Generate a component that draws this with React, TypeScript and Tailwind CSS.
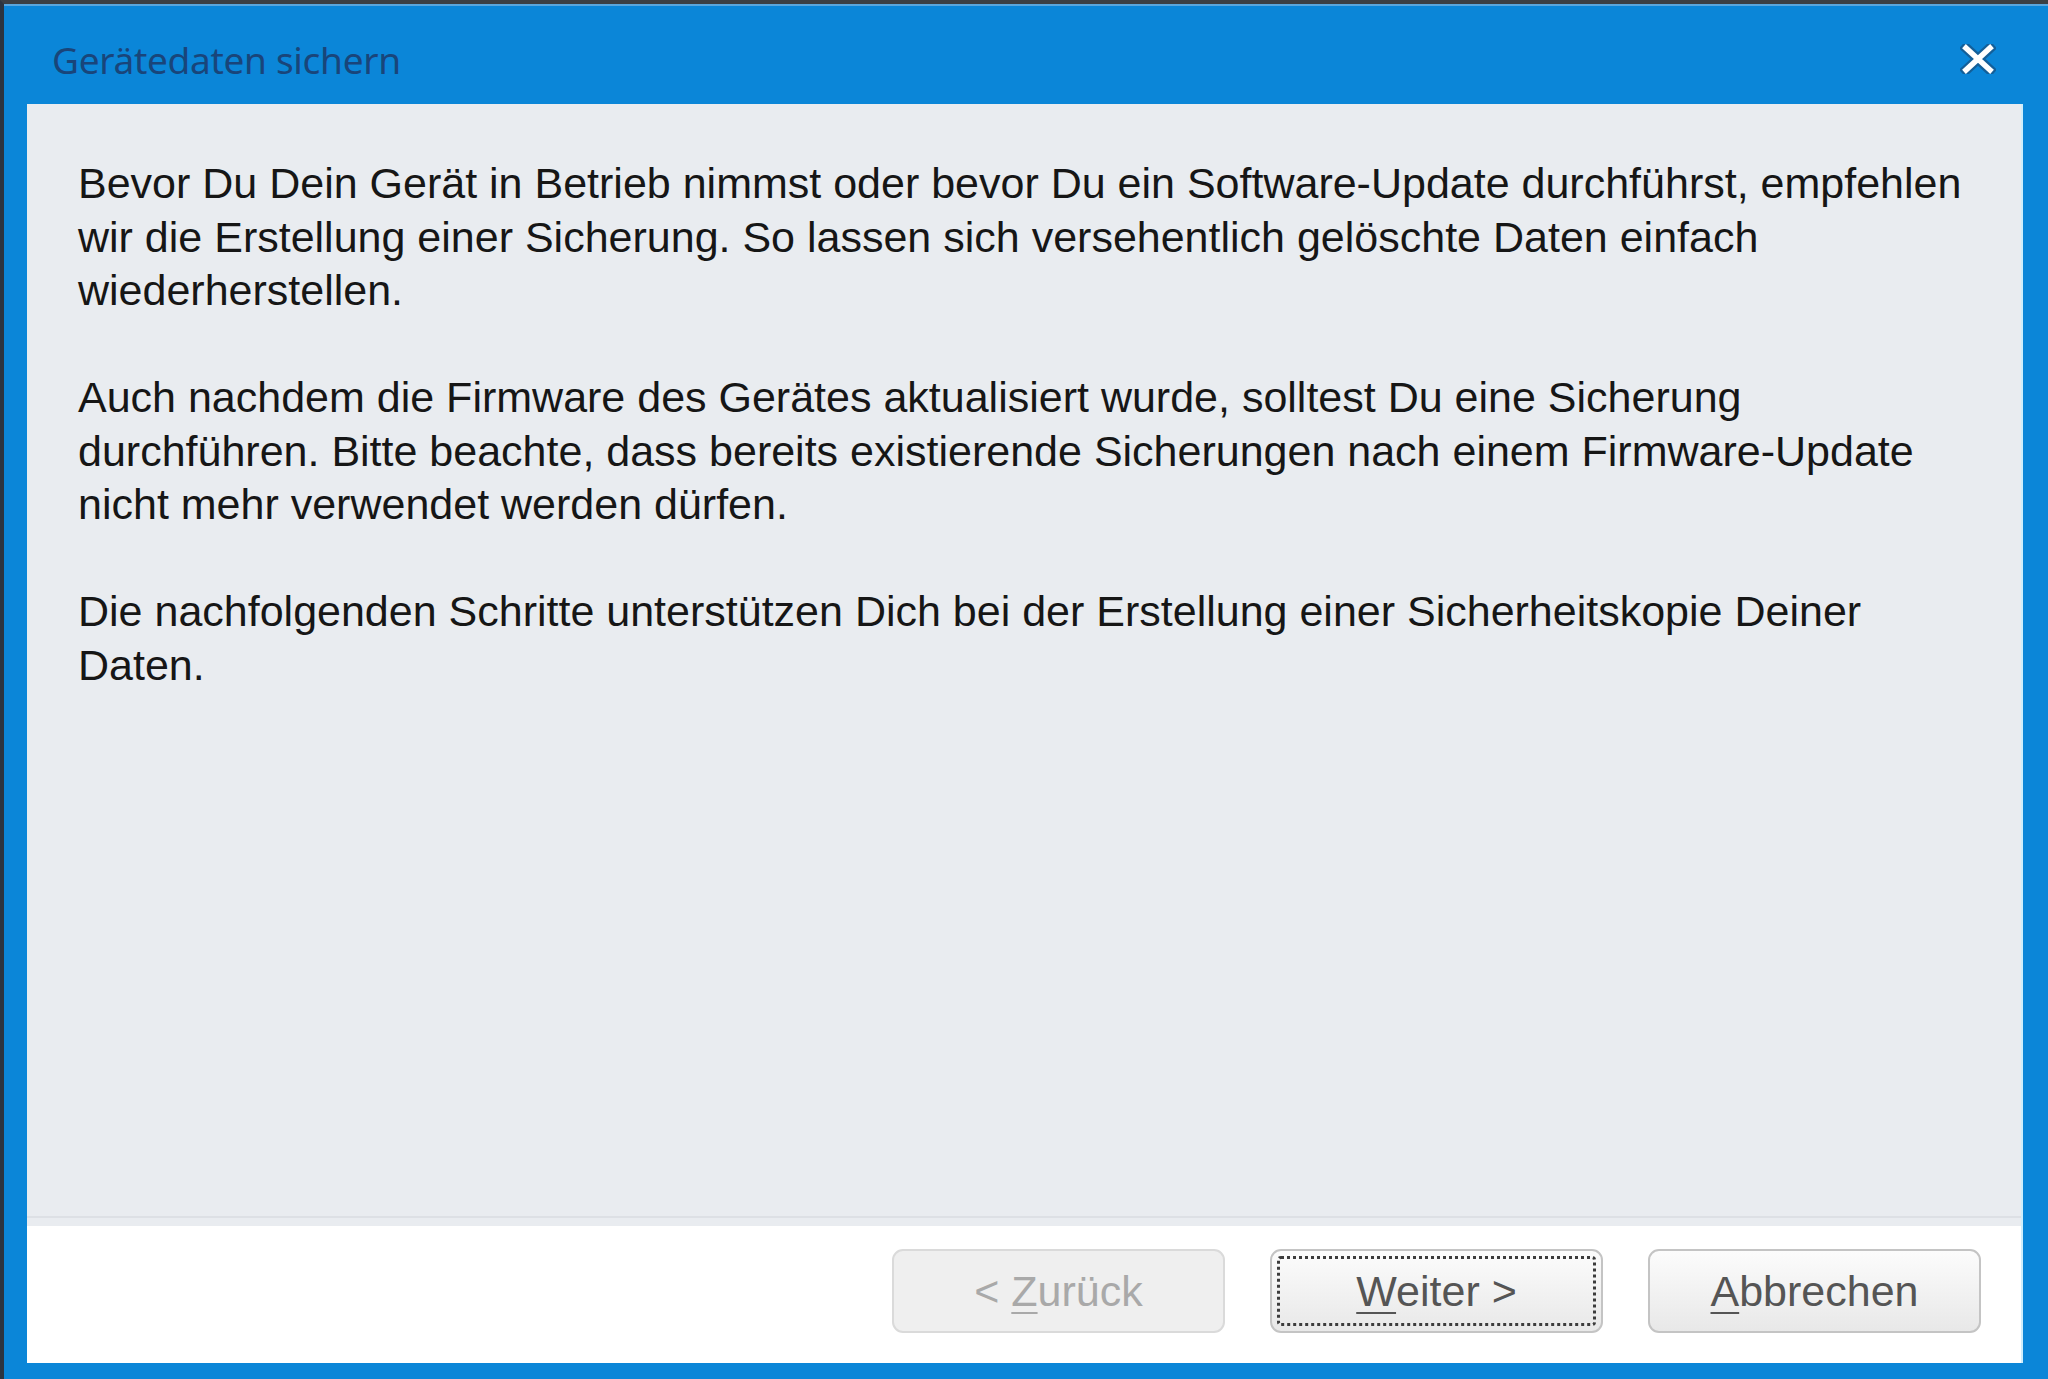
import React from 'react';

const paragraphs: string[][] = [
  [
    'Bevor Du Dein Gerät in Betrieb nimmst oder bevor Du ein Software-Update durchführst, empfehlen',
    'wir die Erstellung einer Sicherung. So lassen sich versehentlich gelöschte Daten einfach',
    'wiederherstellen.',
  ],
  [
    'Auch nachdem die Firmware des Gerätes aktualisiert wurde, solltest Du eine Sicherung',
    'durchführen. Bitte beachte, dass bereits existierende Sicherungen nach einem Firmware-Update',
    'nicht mehr verwendet werden dürfen.',
  ],
  [
    'Die nachfolgenden Schritte unterstützen Dich bei der Erstellung einer Sicherheitskopie Deiner',
    'Daten.',
  ],
];

function CloseIcon() {
  return (
    <svg width="36" height="30" viewBox="0 0 36 30" className="block">
      <g strokeLinecap="square">
        <path d="M6 4 L30 26 M30 4 L6 26" stroke="#1c3f66" strokeOpacity="0.55" strokeWidth="10" />
        <path d="M6 4 L30 26 M30 4 L6 26" stroke="#ffffff" strokeWidth="5.5" />
      </g>
    </svg>
  );
}

type BtnProps = {
  mnemonic: string;
  before?: string;
  after: string;
  disabled?: boolean;
  focused?: boolean;
};

function WizardButton({ mnemonic, before = '', after, disabled, focused }: BtnProps) {
  const base =
    'w-[333px] h-[84px] rounded-[11px] flex items-center justify-center text-[43px] leading-none';
  const look = disabled
    ? 'bg-[#efefef] border-2 border-[#dadada] text-[#a9a9a9]'
    : 'bg-gradient-to-b from-[#fcfcfc] to-[#e8e8e8] border-2 border-[#c4c4c4] text-[#555555]';
  const focus = focused ? 'outline-[3px] outline-dotted outline-[#3c3c3c] outline-offset-[-10px]' : '';
  return (
    <button className={`${base} ${look} ${focus}`} style={{ fontFamily: '"Liberation Sans", Arial, sans-serif' }}>
      <span>
        {before}
        <u className="underline decoration-2 underline-offset-[6px]">{mnemonic}</u>
        {after}
      </span>
    </button>
  );
}

export default function App() {
  return (
    <div className="w-[2048px] h-[1379px] overflow-hidden bg-[#0b86d8] border-t-4 border-l-4 border-t-[#3b3f44] border-l-[#2c3440] flex flex-col">
      {/* title bar */}
      <div className="h-[100px] shrink-0 flex items-center justify-between pl-[48px] pr-[52px] pt-[8px] border-t-2 border-[#5aa6dd]">
        <span
          className="text-[37px] leading-none tracking-[-0.3px] text-[#19457a]"
          style={{ fontFamily: '"Noto Sans", "Open Sans", sans-serif' }}
        >
          Gerätedaten sichern
        </span>
        <CloseIcon />
      </div>

      {/* client area */}
      <div className="flex-1 ml-[23px] mr-[25px] mb-[16px] flex flex-col bg-white border-r-2 border-[#cfeefc]">
        <div
          className="flex-1 bg-[#e9ecf0] flex flex-col pl-[51px] pr-[40px] pt-[53px] text-[43px] leading-[53.5px] text-[#161616]"
          style={{ fontFamily: '"Liberation Sans", Arial, sans-serif' }}
        >
          <div className="flex-1 flex flex-col gap-[53.5px]">
            {paragraphs.map((lines, i) => (
              <p key={i}>
                {lines.map((l, j) => (
                  <span key={j} className="block whitespace-nowrap">
                    {l}
                  </span>
                ))}
              </p>
            ))}
          </div>
          <div className="h-[2px] bg-[#dde0e5] -ml-[51px] -mr-[40px] mb-[8px]" />
        </div>

        {/* button row */}
        <div className="h-[137px] shrink-0 flex items-start justify-end gap-[45px] pt-[23px] pr-[40px]">
          <WizardButton before="< " mnemonic="Z" after="urück" disabled />
          <WizardButton mnemonic="W" after="eiter >" focused />
          <WizardButton mnemonic="A" after="bbrechen" />
        </div>
      </div>
    </div>
  );
}
